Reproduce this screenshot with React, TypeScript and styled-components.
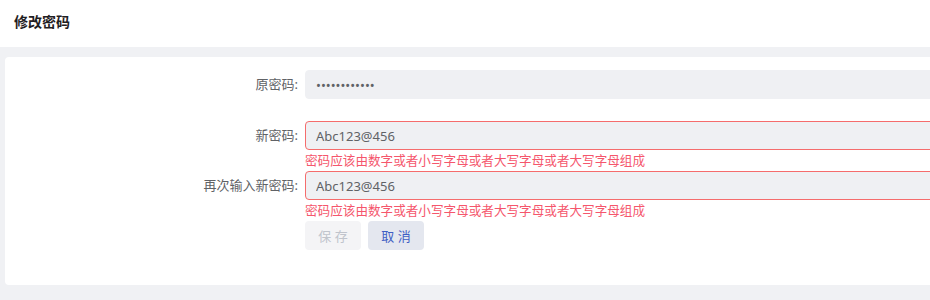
import styled, { createGlobalStyle } from 'styled-components';

const GlobalStyle = createGlobalStyle`
  html, body {
    margin: 0;
    padding: 0;
    background: #f0f1f4;
    font-family: "Noto Sans", "Noto Sans CJK SC", sans-serif;
  }
`;

const ERROR_TEXT = '密码应该由数字或者小写字母或者大写字母或者大写字母组成';

const App = () => {
  return (
    <Page>
      <GlobalStyle />
      <Header>
        <Title>修改密码</Title>
      </Header>
      <Body>
        <Card>
          <FormItem $gap={22}>
            <Label>原密码:</Label>
            <Field>
              <Input type="password" readOnly value="123456789012" />
            </Field>
          </FormItem>
          <FormItem>
            <Label>新密码:</Label>
            <Field>
              <Input $error readOnly value="Abc123@456" />
              <ErrorText>{ERROR_TEXT}</ErrorText>
            </Field>
          </FormItem>
          <FormItem>
            <Label>再次输入新密码:</Label>
            <Field>
              <Input $error readOnly value="Abc123@456" />
              <ErrorText>{ERROR_TEXT}</ErrorText>
            </Field>
          </FormItem>
          <FormItem>
            <Label />
            <Actions>
              <Button disabled>保 存</Button>
              <Button $variant="cancel">取 消</Button>
            </Actions>
          </FormItem>
        </Card>
      </Body>
    </Page>
  );
};

export default App;

const Page = styled.div`
  width: 930px;
  height: 300px;
  overflow: hidden;
  display: flex;
  flex-direction: column;
`;

const Header = styled.header`
  height: 47px;
  padding-left: 14px;

  display: flex;
  align-items: center;

  background: #ffffff;
`;

const Title = styled.h1`
  margin: 0 0 6px;

  font-size: 14px;
  font-weight: 700;
  color: #1f2022;
`;

const Body = styled.main`
  padding: 10px 0 14px 5px;
`;

const Card = styled.section`
  width: 1100px;
  padding: 13px 0 35px;

  display: flex;
  flex-direction: column;

  background: #ffffff;
  border-radius: 4px;
`;

const FormItem = styled.div<{ $gap?: number }>`
  margin-bottom: ${({ $gap }) => $gap ?? 0}px;

  display: flex;
  align-items: flex-start;
`;

const Label = styled.label`
  width: 293px;
  padding-right: 7px;
  flex-shrink: 0;

  font-size: 13px;
  line-height: 29px;
  text-align: right;
  color: #606266;
`;

const Field = styled.div`
  flex: 1;

  display: flex;
  flex-direction: column;
`;

const Input = styled.input<{ $error?: boolean }>`
  box-sizing: border-box;
  height: 29px;
  padding: 0 10px;

  font-family: "Noto Sans", "Noto Sans CJK SC", sans-serif;
  font-size: 13px;
  color: #606266;

  background: #eff0f3;
  border: 1px solid ${({ $error }) => ($error ? '#f56c6c' : '#eff0f3')};
  border-radius: 4px;
  outline: none;
`;

const ErrorText = styled.div`
  height: 21px;

  font-size: 12.6px;
  line-height: 21px;
  color: #f5566c;
`;

const Actions = styled.div`
  display: flex;
  column-gap: 7px;
`;

const Button = styled.button<{ $variant?: 'cancel' }>`
  width: 56px;
  height: 29px;
  padding: 0;

  font-family: "Noto Sans", "Noto Sans CJK SC", sans-serif;
  font-size: 13px;
  color: ${({ $variant }) => ($variant === 'cancel' ? '#3f5ec4' : '#c0c4cc')};

  background: ${({ $variant }) => ($variant === 'cancel' ? '#e4e7ef' : '#f4f4f6')};
  border: none;
  border-radius: 4px;
  cursor: pointer;
`;
